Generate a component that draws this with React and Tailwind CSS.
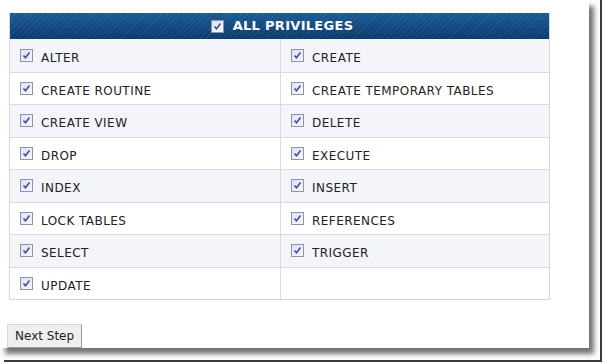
import React from 'react';

const privileges = [
  ['ALTER', 'CREATE'],
  ['CREATE ROUTINE', 'CREATE TEMPORARY TABLES'],
  ['CREATE VIEW', 'DELETE'],
  ['DROP', 'EXECUTE'],
  ['INDEX', 'INSERT'],
  ['LOCK TABLES', 'REFERENCES'],
  ['SELECT', 'TRIGGER'],
  ['UPDATE', null],
];

// Old-style XP checkbox, checked
function Check() {
  return (
    <span className="inline-flex w-[13px] h-[13px] shrink-0 items-center justify-center border border-[#8d94a8] bg-gradient-to-br from-[#dfe3ee] to-[#f7f8fb]">
      <svg width="9" height="9" viewBox="0 0 9 9">
        <path d="M1.5 4.5 L3.5 6.8 L7.5 1.5" fill="none" stroke="#3a4fa8" strokeWidth="1.6" />
      </svg>
    </span>
  );
}

function Cell({ label, border }) {
  return (
    <div className={`flex items-center h-full pl-[10px] ${border ? 'border-r border-[#d9dbe0]' : ''}`}>
      {label && (
        <>
          <Check />
          <span className="ml-[8px] mt-[5px] text-[12px] text-[#222] tracking-[0.45px]">{label}</span>
        </>
      )}
    </div>
  );
}

export default function App() {
  return (
    <div className="relative w-[604px] h-[364px] bg-white overflow-hidden" style={{ fontFamily: '"DejaVu Sans", Verdana, sans-serif' }}>
      {/* window with drop shadow */}
      <div className="w-[589px] h-[348px] bg-white shadow-[5px_6px_5px_rgba(0,0,0,0.55)] pt-[13px] pl-[9px]">
        <div className="w-[541px] border border-[#d4d6dc] border-t-0">
          <div className="h-[26px] flex items-center justify-center gap-[9px] pl-[5px] text-white font-bold text-[13px] tracking-[0.3px] bg-[repeating-linear-gradient(135deg,rgba(255,255,255,0.06)_0px,rgba(255,255,255,0.06)_1px,transparent_1px,transparent_4px),linear-gradient(to_bottom,#1c5b96,#0b3a6e)]">
            <Check />
            <span>ALL PRIVILEGES</span>
          </div>
          {privileges.map(([a, b], i) => (
            <div
              key={a}
              className={`grid grid-cols-[271px_1fr] h-[32.5px] ${i > 0 ? 'border-t border-[#d9dbe0]' : ''} ${i % 2 === 0 ? 'bg-[#f3f5fa]' : 'bg-white'}`}
            >
              <Cell label={a} border />
              <Cell label={b} />
            </div>
          ))}
        </div>
        <button className="mt-[24px] -ml-[2px] h-[24px] px-[7px] bg-[#efefef] border border-[#d8d8d8] border-r-[#9a9a9a] border-b-[#9a9a9a] text-[12px] text-[#222]">
          Next Step
        </button>
      </div>
      {/* outer frame lines */}
      <div className="absolute left-[600px] top-0 w-[2px] h-[362px] bg-[#3a3a3a]" />
      <div className="absolute left-[4px] top-[360px] w-[598px] h-[2px] bg-[#3a3a3a]" />
    </div>
  );
}
